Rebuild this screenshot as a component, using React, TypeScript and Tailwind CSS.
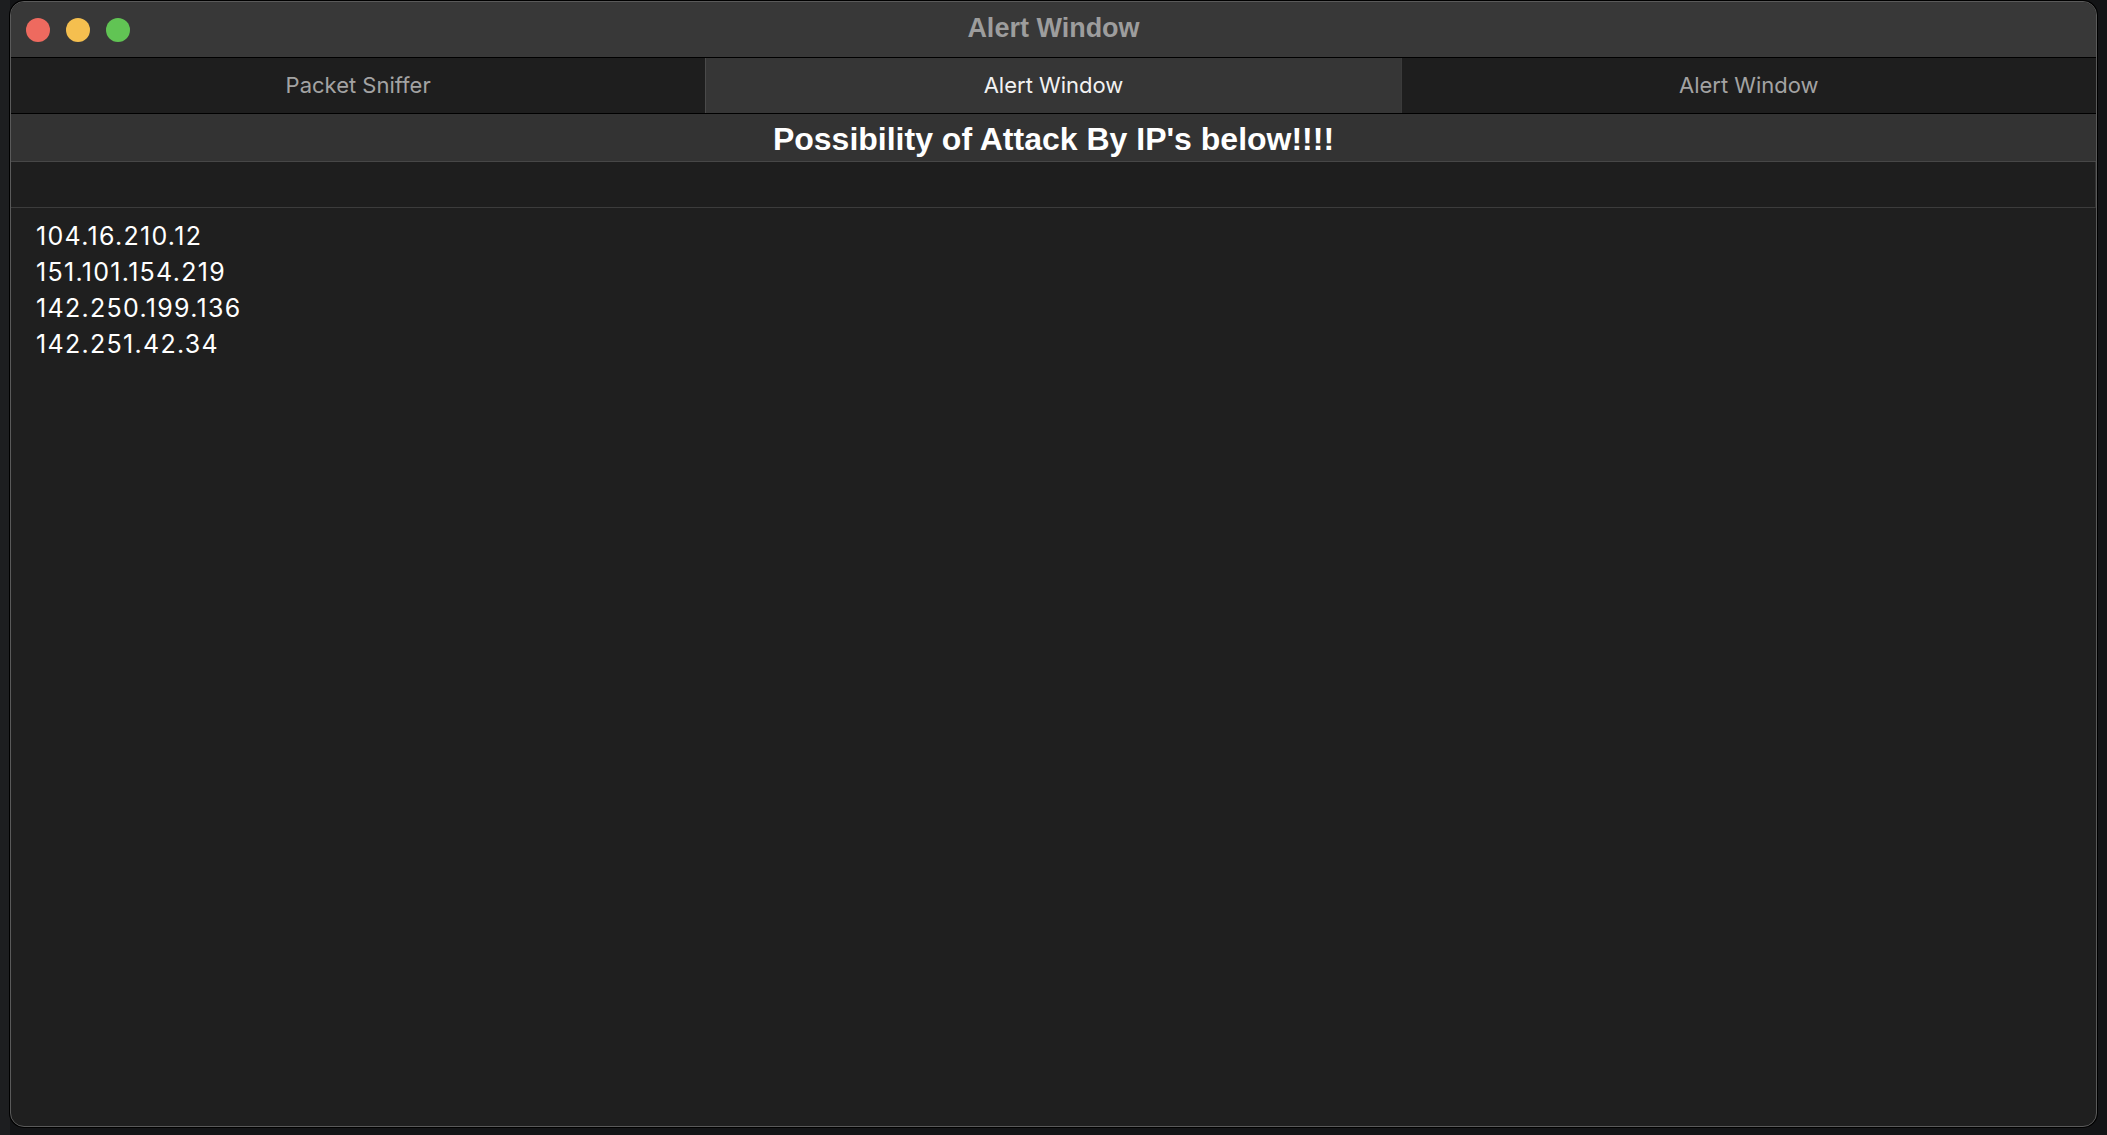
import React from "react";

export default function App() {
  const ips = ["104.16.210.12", "151.101.154.219", "142.250.199.136", "142.251.42.34"];
  return (
    <div className="w-[2107px] h-[1135px] bg-[#131416] overflow-hidden font-['Liberation_Sans',Arial,sans-serif]">
      <div className="flex h-full">
        <div className="w-[10px] h-full bg-[#1d1e20]" />
        <div className="pt-[1px]">
          <div className="w-[2087px] h-[1126px] rounded-[14px] border border-[#5a5a5a] overflow-hidden flex flex-col bg-[#1f1f1f] shadow-[0_0_0_1px_#000]">
            {/* title bar */}
            <div className="h-[56px] shrink-0 bg-[#383838] border-b border-black flex items-center relative">
              <div className="flex items-center gap-[16px] pl-[15px]">
                <span className="w-[24px] h-[24px] rounded-full bg-[#ee6a5f]" />
                <span className="w-[24px] h-[24px] rounded-full bg-[#f5bf4f]" />
                <span className="w-[24px] h-[24px] rounded-full bg-[#61c454]" />
              </div>
              <div className="absolute inset-0 flex items-center justify-center text-[27px] font-bold text-[#9d9d9d] pointer-events-none pb-[2px]">
                Alert Window
              </div>
            </div>
            {/* tabs */}
            <div className="h-[56px] shrink-0 flex border-b border-black bg-[#1e1e1e] text-[22px] font-['Inter',sans-serif]">
              <div className="flex-1 flex items-center justify-center text-[#a3a3a3]">Packet Sniffer</div>
              <div className="flex-1 flex items-center justify-center bg-[#363636] border-l border-[#4a4a4a] text-[#f2f2f2]">Alert Window</div>
              <div className="flex-1 flex items-center justify-center border-l border-[#3a3a3a] text-[#a3a3a3]">Alert Window</div>
            </div>
            {/* header */}
            <div className="h-[48px] shrink-0 bg-[#333333] border-b border-[#474747] flex items-center justify-center text-[32px] font-bold text-white pt-[2px]">
              Possibility of Attack By IP's below!!!!
            </div>
            {/* strip */}
            <div className="h-[46px] shrink-0 bg-[#1e1e1e] border-b border-[#3c3c3c] border-r border-r-[#333]" />
            {/* list */}
            <div className="flex-1 pl-[25px] pt-[10px] text-[25px] leading-[36px] tracking-[1.3px] text-white font-['Inter',sans-serif]">
              {ips.map((ip) => (
                <div key={ip}>{ip}</div>
              ))}
            </div>
          </div>
        </div>
      </div>
    </div>
  );
}
